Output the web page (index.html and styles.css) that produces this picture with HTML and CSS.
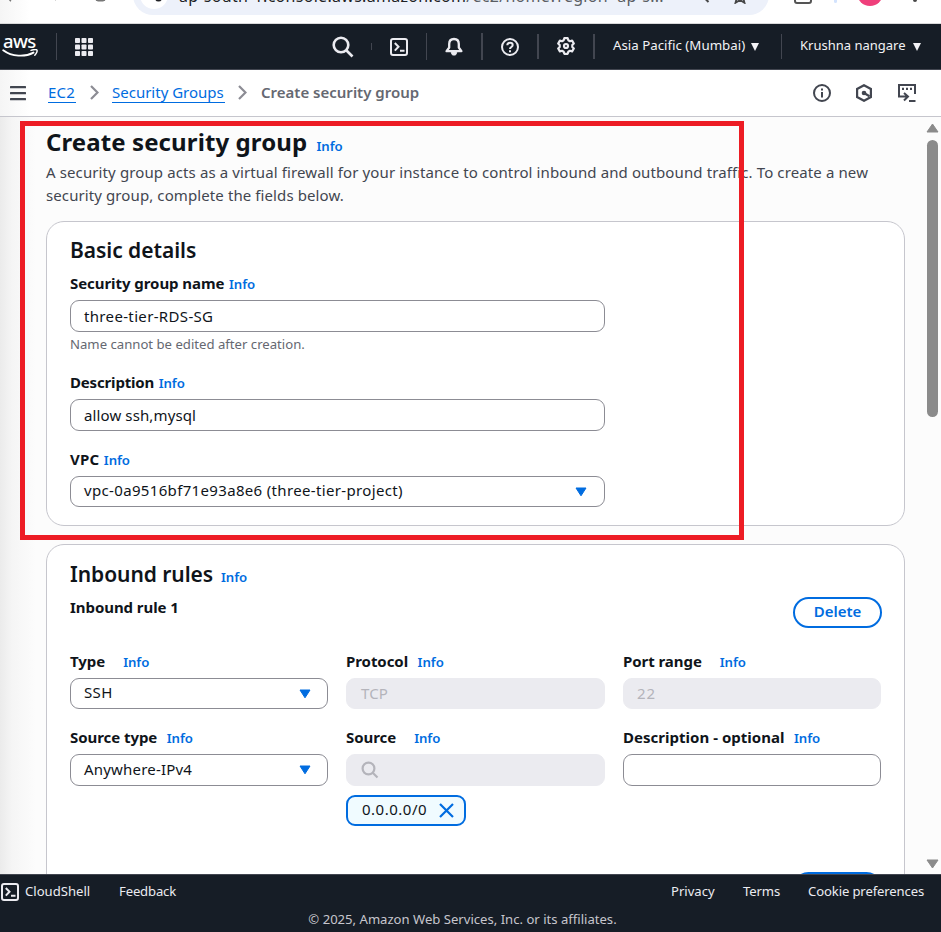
FILE: index.html
```
<!DOCTYPE html>
<html lang="en">
<head>
<meta charset="utf-8">
<title>Create security group</title>
<link rel="stylesheet" href="styles.css">
</head>
<body>
<div class="browser">
  <svg class="history" width="133" height="23" viewBox="0 0 133 23" fill="none" stroke="#777" stroke-width="1.500"><path d="M9.500 0 11 1.200M55 0l1-.8M96 0q4.500 1.600 9 0"/></svg>
  <div class="omnibox">
    <span class="site"><svg width="28" height="28" viewBox="0 0 28 28"><circle cx="18.500" cy="17" r="2.500" fill="none" stroke="#202124" stroke-width="2"/></svg></span>
    <span class="url">ap-south-1.console.aws.amazon.com<i>/ec2/home?region=ap-s...</i></span>
    <svg class="lens" width="12" height="14" viewBox="0 0 12 14" fill="none" stroke="#474747" stroke-width="2"><path d="M5 7.500 10.500 13"/></svg>
    <svg class="star" width="16" height="16" viewBox="0 0 16 16" fill="none" stroke="#474747" stroke-width="1.800"><path d="M8 1.500 10 6l5 .5-3.800 3.300 1.300 5L8 12l-4.500 2.800 1.300-5L1 6.500 6 6z"/></svg>
  </div>
  <span class="ext"></span>
  <span class="split"></span>
  <span class="avatar"></span>
  <span class="dots"></span>
</div>

<header class="nav">
  <div class="logo">
    <span class="logo-text">aws</span>
    <svg width="37" height="9" viewBox="0 0 37 9" fill="none" stroke="#fff" stroke-linecap="round"><path d="M1.200 1.200C10 7.800 23 8.200 31.500 3.600" stroke-width="1.900"/><path d="M29 1.300c2.500-.8 5.500-.9 6-.1s-.6 3.400-2.200 5" stroke-width="1.400"/></svg>
  </div>
  <i class="sep sep-a"></i>
  <svg class="apps" width="18" height="18" viewBox="0 0 18 18" fill="#ebebf0"><rect width="5" height="5" rx=".8"/><rect x="6.500" width="5" height="5" rx=".8"/><rect x="13" width="5" height="5" rx=".8"/><rect y="6.500" width="5" height="5" rx=".8"/><rect x="6.500" y="6.500" width="5" height="5" rx=".8"/><rect x="13" y="6.500" width="5" height="5" rx=".8"/><rect y="13" width="5" height="5" rx=".8"/><rect x="6.500" y="13" width="5" height="5" rx=".8"/><rect x="13" y="13" width="5" height="5" rx=".8"/></svg>
  <div class="tools">
    <svg class="t-search" width="22" height="22" viewBox="0 0 22 22" fill="none" stroke="#ebebf0" stroke-width="2.600"><circle cx="9" cy="9" r="7.300"/><path d="m14 14 6.500 6.500"/></svg>
    <i class="sep short"></i>
    <svg class="cell" width="18" height="18" viewBox="0 0 18 18" fill="none" stroke="#ebebf0" stroke-width="2"><rect x="1" y="1" width="16" height="16" rx="2"/><path d="M4.800 5 8.500 8.800 4.800 12.600M10 12.700h4.500"/></svg>
    <i class="sep"></i>
    <svg class="cell bell" width="18" height="20" viewBox="0 0 18 20" fill="none" stroke="#ebebf0" stroke-width="2.300" stroke-linejoin="round"><path d="M9 2C5.800 2 4.200 4.200 4.200 7v3.500L1.600 14.200h14.800L13.800 10.500V7C13.800 4.200 12.200 2 9 2z"/><path d="M6.200 15.500h5.600L10.500 18h-3z" fill="#ebebf0" stroke-width="1"/></svg>
    <i class="sep wide"></i>
    <svg class="cell" width="18" height="18" viewBox="0 0 18 18" fill="none" stroke="#ebebf0" stroke-width="2"><circle cx="9" cy="9" r="8"/><path d="M6.300 7.300C6.300 5.700 7.400 4.800 9 4.800s2.700.9 2.700 2.300c0 1.900-2.700 1.900-2.700 3.900"/><path d="M9 12.200v2"/></svg>
    <i class="sep wide low"></i>
    <svg class="cell gear" width="18" height="18" viewBox="0 0 18 18" fill="none" stroke="#ebebf0" stroke-width="2.200" stroke-linejoin="round"><path d="M7.300 1.200h3.400l.6 2 1.700 1 2.100-.6 1.700 2.900L15.300 8v2l1.500 1.500-1.700 2.900-2.100-.6-1.700 1-.6 2H7.300l-.6-2-1.700-1-2.100.6-1.700-2.900L2.700 10V8L1.200 6.500l1.700-2.900 2.100.6 1.700-1z"/><circle cx="9" cy="9" r="2"/></svg>
    <i class="sep wide low"></i>
  </div>
  <div class="menu region"><span>Asia Pacific (Mumbai)</span><i class="caret"></i></div>
  <i class="sep low last"></i>
  <div class="menu user"><span>Krushna nangare</span><i class="caret"></i></div>
</header>

<nav class="crumbs">
  <svg class="burger" width="16" height="15" viewBox="0 0 16 15" fill="#424650"><rect width="16" height="2.200" rx=".5"/><rect y="6" width="16" height="2.200" rx=".5"/><rect y="12" width="16" height="2.200" rx=".5"/></svg>
  <a class="c-ec2">EC2</a>
  <svg class="chev" width="9" height="15" viewBox="0 0 9 15" fill="none" stroke="#8c8c94" stroke-width="2.200"><path d="m1 1 6.500 6.500L1 14"/></svg>
  <a class="c-sg">Security Groups</a>
  <svg class="chev" width="9" height="15" viewBox="0 0 9 15" fill="none" stroke="#8c8c94" stroke-width="2.200"><path d="m1 1 6.500 6.500L1 14"/></svg>
  <b>Create security group</b>
  <div class="panel-icons">
    <svg width="18" height="18" viewBox="0 0 18 18" fill="none" stroke="#424650" stroke-width="2"><circle cx="9" cy="9" r="8"/><path d="M9 8v5.500M9 4.500v2"/></svg>
    <svg width="18" height="18" viewBox="0 0 18 18" fill="none" stroke="#424650" stroke-width="2.200"><path d="M9 1.200 15.900 5v8L9 16.800 2.100 13V5z"/><circle cx="9" cy="9" r="2.300" fill="#424650" stroke="none"/><path d="m9 9 5.500 3.300"/></svg>
    <svg class="shell-panel" width="18" height="18" viewBox="0 0 18 18" fill="none" stroke="#424650" stroke-width="2"><path d="M6 12.500H1V1h16v9M1 12.500h8M6 9l4 3.500-4 4M11 17h6.500"/><path d="M4 4.800h2M8 4.800h2M12 4.800h2" stroke-width="2.200"/></svg>
  </div>
</nav>

<main class="main">
  <div class="content">
    <div class="title"><h1>Create security group</h1><a class="info">Info</a></div>
    <p class="lead">A security group acts as a virtual firewall for your instance to control inbound and outbound traffic. To create a new<br><span>security group, complete the fields below.</span></p>

    <section class="card basic">
      <div class="title"><h2>Basic details</h2></div>
      <div class="field first">
        <div class="label tight"><b>Security group name</b><a class="info">Info</a></div>
        <div class="input">three-tier-RDS-SG</div>
        <div class="hint">Name cannot be edited after creation.</div>
      </div>
      <div class="field second">
        <div class="label tight"><b class="desc">Description</b><a class="info">Info</a></div>
        <div class="input allow">allow ssh,mysql</div>
      </div>
      <div class="field third">
        <div class="label tight"><b class="vpc-label">VPC</b><a class="info">Info</a></div>
        <div class="input select vpc"><span>vpc-0a9516bf71e93a8e6 (three-tier-project)</span><svg width="12" height="10" viewBox="0 0 12 10"><path d="M1 1h10L6 8.800z" fill="#006ce0" stroke="#006ce0" stroke-linejoin="round"/></svg></div>
      </div>
    </section>

    <section class="card inbound">
      <div class="title"><h2>Inbound rules</h2><a class="info">Info</a></div>
      <div class="rule-head"><b>Inbound rule 1</b><button class="btn">Delete</button></div>
      <div class="grid">
        <div>
          <div class="label far"><b>Type</b><a class="info">Info</a></div>
          <div class="input select ssh"><span>SSH</span><svg width="12" height="10" viewBox="0 0 12 10"><path d="M1 1h10L6 8.800z" fill="#006ce0" stroke="#006ce0" stroke-linejoin="round"/></svg></div>
        </div>
        <div>
          <div class="label"><b>Protocol</b><a class="info">Info</a></div>
          <div class="input off"><span>TCP</span></div>
        </div>
        <div>
          <div class="label far"><b>Port range</b><a class="info">Info</a></div>
          <div class="input off"><span class="port">22</span></div>
        </div>
      </div>
      <div class="grid tall">
        <div>
          <div class="label"><b>Source type</b><a class="info">Info</a></div>
          <div class="input select any"><span>Anywhere-IPv4</span><svg width="12" height="10" viewBox="0 0 12 10"><path d="M1 1h10L6 8.800z" fill="#006ce0" stroke="#006ce0" stroke-linejoin="round"/></svg></div>
        </div>
        <div>
          <div class="label far"><b>Source</b><a class="info">Info</a></div>
          <div class="input off"><svg width="18" height="18" viewBox="0 0 18 18" fill="none" stroke="#b4b4bb" stroke-width="2.200"><circle cx="7.500" cy="7.500" r="5.900"/><path d="m11.700 11.700 4.800 4.800"/></svg></div>
          <div class="token"><span>0.0.0.0/0</span><svg width="15" height="15" viewBox="0 0 15 15" fill="none" stroke="#006ce0" stroke-width="2.200"><path d="m1 1 13 13M14 1 1 14"/></svg></div>
        </div>
        <div>
          <div class="label"><b class="opt">Description - optional</b><a class="info">Info</a></div>
          <div class="input"></div>
        </div>
      </div>
      <div class="more"><button class="btn"></button></div>
    </section>
  </div>
  <div class="scroll">
    <svg width="13" height="10" viewBox="0 0 13 10"><path d="M6.500 1 12 9H1z" fill="#8b8b8b" stroke="#8b8b8b" stroke-linejoin="round"/></svg>
    <span class="thumb"></span>
    <svg class="down" width="13" height="10" viewBox="0 0 13 10"><path d="M6.500 9 12 1H1z" fill="#8b8b8b" stroke="#8b8b8b" stroke-linejoin="round"/></svg>
  </div>
</main>

<footer class="footer">
  <div class="links">
    <svg width="18" height="18" viewBox="0 0 18 18" fill="none" stroke="#ebebf0" stroke-width="2"><rect x="1" y="1" width="16" height="16" rx="2"/><path d="M4.800 5 8.500 8.800 4.800 12.600M10 12.700h4.500"/></svg>
    <span class="f-shell">CloudShell</span><span class="f-feed">Feedback</span>
    <span class="f-priv">Privacy</span><span class="f-terms">Terms</span><span class="f-cookie">Cookie preferences</span>
  </div>
  <div class="copy">© 2025, Amazon Web Services, Inc. or its affiliates.</div>
</footer>

<div class="highlight"></div>
</body>
</html>
```
FILE: styles.css
```
* { box-sizing: border-box; }
body {
  margin: 0; width: 941px; height: 932px; overflow: hidden;
  display: flex; flex-direction: column; position: relative;
  font: 15px/20px "Noto Sans", "Open Sans", sans-serif; color: #0f141a; background: #fff;
}
svg { display: block; flex: none; }
h1, h2, p { margin: 0; }

/* browser toolbar */
.browser { height: 24px; flex: none; overflow: hidden; display: flex; align-items: flex-end; border-bottom: 1px solid #d9d9da; background: linear-gradient(90deg, #f5f5f5, #fff 30px); }
.omnibox { width: 636px; height: 40px; margin-bottom: 8px; border-radius: 20px; background: #edf1fa; display: flex; align-items: flex-end; padding-left: 7px; flex: none; }
.site { width: 28px; height: 28px; margin-bottom: 6px; border-radius: 50%; background: #fff; overflow: hidden; }
.url { margin: 0 0 7px 11px; width: 486px; line-height: 24px; font-size: 16px; letter-spacing: .29px; white-space: nowrap; color: #202124; }
.url i { font-style: normal; color: #5a5d63; }
.lens { margin: 0 0 12px 33px; }
.star { margin: 0 0 11px 22px; }
.ext { width: 18px; height: 20px; margin: 0 0 19px 25px; border: 2px solid #555; border-radius: 3px; flex: none; }
.split { width: 3px; height: 20px; margin: 0 0 20px 22px; background: #d3e3fd; border-radius: 2px; flex: none; }
.avatar { width: 26px; height: 26px; margin: 0 0 17px 20px; border-radius: 50%; background: #ef3f7b; flex: none; }
.dots { width: 4px; height: 4px; margin: 0 0 21px 30px; border-radius: 50%; background: #474747; flex: none; }

/* console header */
.nav { height: 46px; flex: none; display: flex; align-items: flex-start; background: #161d26; border-bottom: 1px solid #424650; color: #f2f2f5; }
.logo { width: 37px; margin: 9px 0 0 1px; }
.logo-text { display: block; height: 15px; margin-left: 2px; font-size: 18.500px; line-height: 15px; letter-spacing: -.6px; font-weight: 500; color: #fff; }
.logo svg { margin: 1px 0 0 1px; }
.sep { width: 1px; height: 27px; margin-top: 9px; background: #424650; flex: none; }
.sep.wide { width: 2px; }
.sep.low { height: 25px; margin-top: 10px; }
.sep.short { height: 7px; margin-top: 19px; }
.sep-a { margin-left: 18px; }
.apps { margin: 14px 0 0 18px; }
.tools { display: flex; margin-left: 239px; }
.t-search { margin: 12px 17px 0 0; }
.cell { margin: 14px 18px 0; }
.bell, .gear { margin-top: 13px; }
.menu { display: flex; line-height: 20px; margin-top: 11px; white-space: nowrap; }
.caret { width: 0; height: 0; border: 4.500px solid transparent; border-top: 8px solid #f2f2f5; border-bottom: 0; margin: 8px 0 0 6px; }
.region { margin-left: 18px; font-size: 13.300px; }
.region span { width: 132px; }
.last { margin-left: 22px; }
.user { margin-left: 18px; font-size: 13px; }
.user span { width: 107px; }

/* breadcrumbs */
.crumbs { height: 47px; flex: none; display: flex; align-items: flex-start; border-bottom: 1px solid #c6c6cd; padding-left: 10px; background: linear-gradient(90deg, #f5f5f5, #fff 30px); }
.burger { margin-top: 16px; }
.crumbs a { height: 21px; margin-top: 12px; border-bottom: 1px solid #006ce0; color: #006ce0; white-space: nowrap; }
.crumbs b { margin: 12px 0 0 14px; font-weight: 600; color: #656871; width: 160px; white-space: nowrap; }
.c-ec2 { width: 28px; margin-left: 22px; letter-spacing: .2px; }
.c-sg { width: 113px; margin-left: 13px; }
.chev { margin: 15px 0 0 14px; }
.c-sg + .chev { margin-left: 13px; }
.panel-icons { display: flex; gap: 24px; margin: 14px 0 0 392px; }
.shell-panel { margin-left: 1px; }

/* page body */
.main { flex: 1; min-height: 0; overflow: hidden; display: flex; background: linear-gradient(90deg, #ebebeb, #f5f5f5 12px, #fcfcfc 36px); }
.content { width: 859px; margin-left: 46px; padding-top: 10px; flex: none; }
.title { display: flex; align-items: baseline; }
.content > .title { height: 30px; line-height: 30px; }
h1 { font-size: 24px; font-weight: 700; letter-spacing: .1px; width: 270.500px; white-space: nowrap; }
h2 { font-size: 21px; font-weight: 650; letter-spacing: -.05px; white-space: nowrap; }
.info { color: #006ce0; font-size: 13.200px; font-weight: 600; letter-spacing: -.05px; }
.lead { margin-top: 4px; line-height: 23px; letter-spacing: .116px; color: #424650; white-space: nowrap; }
.lead span { letter-spacing: .1px; }
.card { border: 1px solid #c6c6cd; border-radius: 18px; background: #fff; padding: 0 23px; }
.card .title { height: 28px; line-height: 28px; }
.basic { height: 305px; margin-top: 14px; padding-top: 14px; }
.inbound { height: 420px; margin-top: 18px; padding-top: 15px; }
.inbound .title { gap: 9px; }
.inbound h2 { width: 142px; }
.first { margin-top: 9px; }
.second { margin-top: 19px; }
.third { margin-top: 18px; }
.label { height: 20px; display: flex; align-items: baseline; gap: 9.500px; white-space: nowrap; }
.label b { font-weight: 700; letter-spacing: -.06px; }
.label .desc { letter-spacing: -.17px; }
.label .vpc-label { letter-spacing: .2px; }
.label .opt { letter-spacing: .02px; }
.rule-head b { font-weight: 670; letter-spacing: -.06px; }
.label.tight { gap: 4.500px; }
.label.far { gap: 18px; }
.input { width: 535px; height: 32px; margin-top: 7px; padding-left: 13px; border: 1px solid #8c8c94; border-radius: 9px; background: #fff; display: flex; align-items: center; letter-spacing: .34px; }
.allow { letter-spacing: .12px; }
.select { height: 31px; justify-content: space-between; padding-right: 17px; }
.grid .select { padding-right: 16px; }
.select span { margin-top: -3px; }
.select svg { margin-top: 1px; }
.hint { margin-top: 3px; font-size: 13.150px; line-height: 18px; color: #656871; }
.rule-head { height: 31px; margin-top: 9px; display: flex; justify-content: space-between; align-items: flex-start; }
.btn { width: 89px; height: 31px; padding: 0 0 3px; margin-right: -1px; border: 2px solid #006ce0; border-radius: 16px; background: #fff; color: #006ce0; font: 650 15px/20px "Noto Sans", sans-serif; }
.grid { display: grid; grid-template-columns: 258px 259px 258px; gap: 18px; margin-top: 23px; }
.grid .input { width: 100%; height: 31px; margin-top: 7px; }
.grid.tall { margin-top: 18px; }
.grid.tall .input { height: 32px; }
.grid .off { background: #ebebf0; border-color: #ebebf0; color: #b4b4bb; padding-left: 14px; letter-spacing: .1px; }
.off span { margin-top: -1px; }
.off .port { margin-left: -1px; letter-spacing: .8px; }
.any { letter-spacing: .19px; }
.any span { margin-top: -3px; }
.any svg { margin-top: 0; }
.token { width: 120px; height: 31px; margin-top: 9px; padding: 0 10px 0 14px; display: flex; align-items: center; justify-content: space-between; border: 2px solid #006ce0; border-radius: 9px; background: #f0fbff; letter-spacing: .5px; }
.token span { margin-top: -3px; }
.token svg { margin-top: -1px; }
.more { display: flex; justify-content: flex-end; margin-top: 46px; }

/* scrollbar */
.scroll { width: 13px; margin: 6px 0 5px 21px; display: flex; flex-direction: column; align-items: center; }
.thumb { width: 11px; height: 277px; margin-top: 7px; border-radius: 6px; background: #8b8b8b; }
.down { margin-top: auto; }

/* footer */
.footer { height: 58px; flex: none; background: #161d26; border-top: 1px solid #424650; color: #ebebf0; font-size: 13.100px; }
.links { display: flex; padding: 7px 0 0 1px; height: 34px; white-space: nowrap; }
.links svg { margin-top: 1px; }
.links span { line-height: 18px; }
.f-shell { width: 94px; margin-left: 6px; }
.f-feed { width: 552px; letter-spacing: -.15px; }
.f-priv { width: 72px; }
.f-terms { width: 65px; letter-spacing: -.1px; }
.f-cookie { letter-spacing: -.12px; }
.copy { text-align: center; line-height: 20px; padding-right: 16px; color: #c6c6cd; }

/* annotation frame */
.highlight { position: absolute; left: 20px; top: 121px; width: 724px; height: 419px; border: 5px solid #ed1c24; pointer-events: none; }
```
